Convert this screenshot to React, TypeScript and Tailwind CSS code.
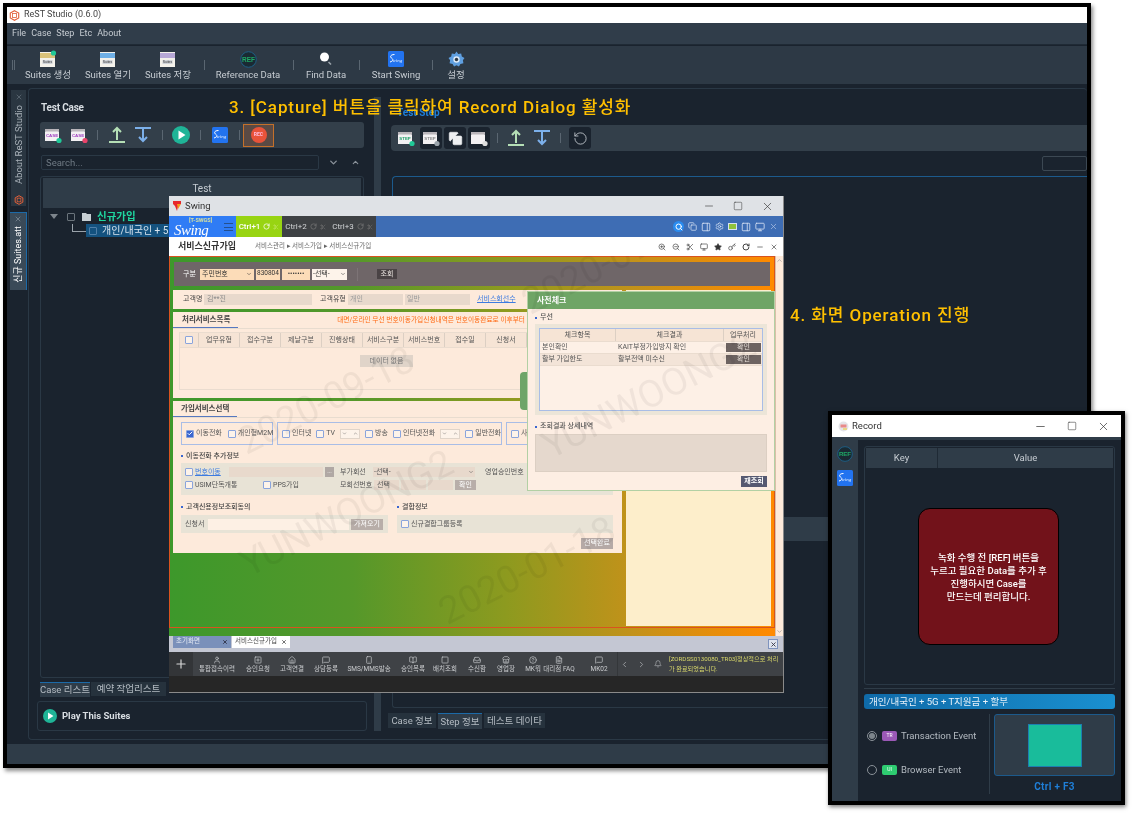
import { Check, ChevronLeft, ChevronRight, Bell, Copy, Key, Minus, Monitor, PanelRight, RotateCw, Scissors, Search, Settings, Square, Star, X, ZoomIn, ZoomOut, ChevronDown, ChevronUp, Plus, User, Home, MessageSquare, Smartphone, BookOpen, Inbox, Store, HelpCircle, FileText, PlusSquare } from "lucide-react";
import type { ReactNode } from "react";

function SwingBadge({ size = 16 }: { size?: number }) {
  return (
    <svg width={size} height={size} viewBox="0 0 16 16">
      <rect width="16" height="16" rx="1.5" fill="#2273f0" />
      <path d="M6.5 3.5C3 3.5 1.5 5.5 3.5 7S5.5 10 2 11" stroke="#fff" strokeWidth="1" fill="none" />
      <text x="4.5" y="11" fontSize="5" fontStyle="italic" fill="#e6f0ff" fontFamily="Liberation Serif">wing</text>
    </svg>
  );
}

function RefBadge({ size = 17 }: { size?: number }) {
  return (
    <svg width={size} height={size} viewBox="0 0 17 17">
      <circle cx="8.5" cy="8.5" r="7.8" fill="#1a2a33" stroke="#1d5f86" strokeWidth="1" />
      <text x="8.5" y="11" textAnchor="middle" fontSize="6.5" fontWeight="700" fill="#1fa866" fontFamily="Liberation Sans">REF</text>
    </svg>
  );
}

function SuiteIcon({ tone, dot }: { tone: string; dot?: boolean }) {
  return (
    <svg width="18" height="18" viewBox="0 0 18 18">
      <rect x="1" y="2" width="15" height="15" fill="#f3f1ea" />
      <rect x="1" y="3" width="15" height="5" fill={tone} />
      <rect x="3.5" y="10" width="10" height="4" fill="#cfd3d8" />
      <text x="8.5" y="13.4" textAnchor="middle" fontSize="3.4" fill="#333" fontFamily="Liberation Sans">Suites</text>
      {dot && <circle cx="14.5" cy="3" r="2.6" fill="#20c997" />}
    </svg>
  );
}

function BoxIcon({ label, color, dot }: { label: string; color: string; dot: string }) {
  return (
    <svg width="18" height="18" viewBox="0 0 18 18">
      <path d="M2 4h12l1 2v9H1V6z" fill="#f3f1f3" />
      <rect x="1" y="3" width="14" height="2.5" fill="#b9b5ba" />
      <text x="8" y="11" textAnchor="middle" fontSize="4.4" fontWeight="700" fill={color} fontFamily="Liberation Sans">{label}</text>
      <circle cx="15" cy="14.5" r="2.6" fill={dot} />
    </svg>
  );
}

function UpArrow() {
  return (
    <svg width="18" height="18" viewBox="0 0 18 18" fill="none">
      <path d="M9 2v12M5 6l4-4 4 4" stroke="#b5dfb6" strokeWidth="2" />
      <path d="M1 16h16" stroke="#b5dfb6" strokeWidth="2" />
    </svg>
  );
}

function DownArrow() {
  return (
    <svg width="18" height="18" viewBox="0 0 18 18" fill="none">
      <path d="M1 2h16" stroke="#7cb0ea" strokeWidth="2" />
      <path d="M9 3v12M5 11l4 4 4-4" stroke="#7cb0ea" strokeWidth="2" />
    </svg>
  );
}

function PlayDot({ size = 18 }: { size?: number }) {
  return (
    <svg width={size} height={size} viewBox="0 0 18 18">
      <circle cx="9" cy="9" r="9" fill="#1fb497" />
      <path d="M6.5 4.5l7 4.5-7 4.5z" fill="#fff" />
    </svg>
  );
}

function Hex({ size = 10 }: { size?: number }) {
  return (
    <svg width={size} height={size} viewBox="0 0 12 12" fill="none">
      <path d="M6 .8l4.6 2.6v5.2L6 11.2 1.4 8.6V3.4z" stroke="#e2603a" strokeWidth="1.2" />
      <rect x="3.8" y="3.8" width="4.4" height="4.4" stroke="#e2603a" strokeWidth=".9" />
    </svg>
  );
}

function Vsep({ cls = "" }: { cls?: string }) {
  return <span className={`block w-px h-[10px] bg-[#5a6671] ${cls}`} />;
}

function ToolItem({ width, label, children }: { width: string; label: string; children: ReactNode }) {
  return (
    <div className={`${width} flex flex-col items-center`}>
      <div className="h-[19px] flex items-center justify-center">{children}</div>
      <span className="-mt-[1px] text-[9.5px] leading-[13px] text-[#c6ccd2] whitespace-nowrap">{label}</span>
    </div>
  );
}

function DarkBtn({ children }: { children: ReactNode }) {
  return <div className="w-[22px] h-[22px] rounded-[3px] bg-[#1a232e] flex items-center justify-center">{children}</div>;
}

function SwingItem({ w, label, children }: { w: string; label: string; children: ReactNode }) {
  return (
    <div className={`${w} shrink-0 flex flex-col items-center text-[#c9cbce]`}>
      {children}
      <span className="mt-[1px] text-[6.5px] leading-[8px] whitespace-nowrap">{label}</span>
    </div>
  );
}

function Cb({ on, cls = "" }: { on?: boolean; cls?: string }) {
  return (
    <span className={`shrink-0 w-[8px] h-[8px] rounded-[1px] border border-[#8aa4dc] flex items-center justify-center ${on ? "bg-[#3a66d0]" : "bg-[#fdf3ea]"} ${cls}`}>
      {on && <Check size={7} color="#fff" strokeWidth={4} />}
    </span>
  );
}

function Head({ children, w }: { children: ReactNode; w: string }) {
  return <div className={`${w} h-full border-r border-[#dccfc3] flex items-center justify-center`}>{children}</div>;
}

function Mark({ cls, children }: { cls: string; children: string }) {
  return <span className={`absolute pointer-events-none whitespace-nowrap text-[38px] leading-none text-black/[0.05] -rotate-[27deg] ${cls}`}>{children}</span>;
}

function SwingWindow() {
  return (
    <div className="absolute left-[169px] top-[196px] w-[615px] h-[497px] flex flex-col bg-[#262626] border-r border-b border-[#8a8a8a]">
      <div className="h-[20px] shrink-0 bg-[#dfe2e6] flex items-center pl-[3px] text-[#333]">
        <svg width="10" height="12" viewBox="0 0 10 12">
          <path d="M1 1h8v3H6.5L5 11 3 6 1 4z" fill="#e8272c" />
          <path d="M5 4h4L6 9z" fill="#f59a1c" />
        </svg>
        <span className="ml-[3px] text-[9.5px]">Swing</span>
        <div className="ml-auto flex items-center gap-[18px] pr-[9px]">
          <Minus size={12} strokeWidth={1.2} />
          <Square size={10} strokeWidth={1.2} />
          <X size={13} strokeWidth={1.2} />
        </div>
      </div>

      <div className="h-[21px] shrink-0 bg-[#3e6db4] flex items-stretch">
        <div className="w-[67px] bg-[#2f7cf5] flex items-center relative pl-[5px]">
          <span className="absolute left-[20px] top-[1px] text-[5.5px] leading-[7px] text-[#d6e0a0] font-bold whitespace-nowrap">[T-SWGS]</span>
          <span className="mt-[6px] text-[15px] leading-[14px] text-white italic font-['Liberation_Serif',serif] tracking-[-0.5px]">Swing</span>
          <div className="absolute right-[3px] top-[7px] w-[9px] h-[8px] border-y border-[#24508f] flex items-center">
            <span className="block w-full h-px bg-[#24508f]" />
          </div>
        </div>
        <div className="w-[46px] bg-[#98d412] flex items-center justify-center gap-[3px] text-white text-[8px] font-medium whitespace-nowrap">
          Ctrl+1 <RotateCw size={7} strokeWidth={2.5} /> <Scissors size={6} className="text-[#c6e76a]" />
        </div>
        {["Ctrl+2", "Ctrl+3"].map((t) => (
          <div key={t} className="w-[47px] bg-[#3e4144] flex items-center justify-center gap-[3px] text-[#d2d4d6] text-[8px] whitespace-nowrap">
            {t} <RotateCw size={7} className="text-[#777]" strokeWidth={2.5} /> <Scissors size={6} className="text-[#777]" />
          </div>
        ))}
        <div className="ml-auto flex items-center gap-[4px] pr-[5px] text-[#d6e1f3]">
          <span className="w-[11px] h-[11px] rounded-full bg-[#2a8cf0] flex items-center justify-center"><Search size={8} color="#fff" strokeWidth={3} /></span>
          <Copy size={9} />
          <PanelRight size={10} />
          <Settings size={9} />
          <span className="w-[9px] h-[7px] bg-[#8fc23c] border border-[#d6e1f3]" />
          <PanelRight size={10} />
          <Monitor size={10} />
          <X size={9} className="text-[#a9bde0]" />
        </div>
      </div>

      <div className="h-[19px] shrink-0 bg-white flex items-center pl-[9px] text-[#444]">
        <span className="w-[77px] text-[9px] font-bold text-[#333] whitespace-nowrap">서비스신규가입</span>
        <span className="text-[6.5px] text-[#666] whitespace-nowrap">서비스관리 ▸ 서비스가입 ▸ 서비스신규가입</span>
        <div className="ml-auto flex items-center gap-[6px] pr-[5px] text-[#444]">
          <ZoomIn size={8} />
          <ZoomOut size={8} />
          <Scissors size={8} />
          <Monitor size={8} />
          <Star size={8} fill="#333" />
          <Key size={8} />
          <RotateCw size={8} strokeWidth={3} />
          <Minus size={8} />
          <X size={8} />
        </div>
      </div>

      <div className="h-[380px] shrink-0 flex bg-[linear-gradient(90deg,#3d982b_0%,#55982a_30%,#8d9a1f_55%,#c1921a_75%,#ff8a00_98%)] relative overflow-hidden whitespace-nowrap">
        <div className="w-[606px] h-[372px] border border-[#d9531e] p-[3px] flex flex-col gap-[4px] text-[#555] text-[7px]">
          <div className="h-[24px] mt-[2px] mx-[1px] bg-[#6f6668] flex items-center pl-[9px] gap-[2px] text-[#333] shrink-0">
            <span className="text-white w-[15px]">구분</span>
            <div className="w-[54px] h-[11px] bg-[#fcdcb8] flex items-center justify-between px-[2px]">주민번호<ChevronDown size={6} /></div>
            <div className="w-[24px] h-[11px] bg-[#fcdcb8] flex items-center px-[1px] text-[6.5px]">830804</div>
            <div className="w-[28px] h-[11px] bg-[#fcdcb8] flex items-center justify-center leading-none">•••••••</div>
            <div className="w-[35px] h-[11px] bg-[#fdf3ea] flex items-center justify-between px-[1px]">-선택-<ChevronDown size={6} /></div>
            <span className="ml-[8px] block w-px h-[13px] bg-[#7d7476]" />
            <span className="ml-[17px] w-[20px] h-[10px] bg-[#4a4345] text-[#e8e2de] flex items-center justify-center">조회</span>
          </div>

          <div className="flex gap-[4px] flex-1 min-h-0">
            <div className="w-[449px] flex flex-col gap-[3px]">
              <div className="h-[19px] bg-[#fdeadb] flex items-center pl-[10px] text-[#444] shrink-0">
                <span className="w-[21px]">고객명</span>
                <span className="w-[108px] h-[11px] bg-[#e8d9cc] pl-[3px] text-[#888] leading-[11px]">김**진</span>
                <span className="ml-[8px] w-[28px]">고객유형</span>
                <span className="w-[55px] h-[11px] bg-[#e8d9cc] pl-[2px] text-[#999] leading-[11px]">개인</span>
                <span className="ml-[2px] w-[65px] h-[11px] bg-[#e8d9cc] pl-[2px] text-[#999] leading-[11px]">일반</span>
                <span className="ml-[7px] text-[#3d7be0] underline">서비스회선수</span>
              </div>

              <div className="h-[86px] bg-[#fdeadb] px-[6px] shrink-0">
                <div className="h-[17px] -mx-[6px] flex items-center justify-between border-b border-[#e8dccf] relative pr-[97px]">
                  <span className="w-[65px] h-full border-b-[1.5px] border-[#5678c0] text-[7.5px] font-bold text-[#444] pl-[9px] leading-[16px]">처리서비스목록</span>
                  <span className="text-[6.7px] text-[#ff6a13]">대면/온라인 무선 번호이동가입신청내역은 번호이동완료로 이후부터</span>
                </div>
                <div className="mt-[3px] h-[16px] flex items-stretch bg-[#f6e4d5] border border-[#eadccf] text-[#555]">
                  <div className="w-[19px] border-r border-[#dccfc3] flex items-center justify-center"><Cb /></div>
                  <Head w="w-[41px]">업무유형</Head>
                  <Head w="w-[41px]">접수구분</Head>
                  <Head w="w-[41px]">제날구분</Head>
                  <Head w="w-[41px]">진행상태</Head>
                  <Head w="w-[41px]">서비스구분</Head>
                  <Head w="w-[41px]">서비스번호</Head>
                  <Head w="w-[41px]">접수일</Head>
                  <Head w="w-[41px]">신청서</Head>
                </div>
                <div className="h-[42px] border border-t-0 border-[#eadccf] flex justify-center pt-[7px] pr-[22px]">
                  <span className="w-[53px] h-[12px] bg-[#e0d4c9] text-[#777] flex items-center justify-center">데이터 없음</span>
                </div>
              </div>

              <div className="h-[152px] bg-[#fdeadb] shrink-0 text-[#555] flex flex-col">
                <div className="h-[17px] border-b border-[#e8dccf] shrink-0">
                  <span className="block w-[64px] h-full border-b-[1.5px] border-[#5678c0] text-[7.5px] font-bold text-[#444] pl-[8px] leading-[16px]">가입서비스선택</span>
                </div>
                <div className="mt-[4px] pl-[8px] flex gap-[4px] shrink-0">
                  <div className="w-[92px] h-[23px] border border-[#a9bde6] flex items-center pl-[4px] gap-[2px]">
                    <Cb on /><span className="mr-[4px]">이동전화</span><Cb /><span>개인형M2M</span>
                  </div>
                  <div className="w-[225px] h-[23px] border border-[#a9bde6] flex items-center pl-[4px] gap-[2px]">
                    <Cb /><span className="mr-[3px]">인터넷</span><Cb /><span>TV</span>
                    <span className="mx-[3px] w-[26px] h-[10px] border border-[#e0d4c9] bg-[#fdf3ea] flex items-center justify-between px-[1px]"><ChevronDown size={5} /><ChevronUp size={5} /></span>
                    <Cb /><span className="mr-[3px]">방송</span><Cb /><span>인터넷전화</span>
                    <span className="mx-[3px] w-[26px] h-[10px] border border-[#e0d4c9] bg-[#fdf3ea] flex items-center justify-between px-[1px]"><ChevronDown size={5} /><ChevronUp size={5} /></span>
                    <Cb /><span>일반전화</span>
                  </div>
                  <div className="w-[90px] h-[23px] border border-[#a9bde6] flex items-center pl-[4px] gap-[2px]">
                    <Cb /><span>사</span>
                  </div>
                </div>
                <div className="mt-[5px] pl-[8px] h-[12px] flex items-center font-medium text-[#444] shrink-0">
                  <span className="w-[2px] h-[2px] bg-[#3a66d0] mr-[3px]" />이동전화 추가정보
                </div>
                <div className="mt-[1px] ml-[8px] mr-[9px] h-[32px] bg-[#e8e3d6] shrink-0 flex flex-col gap-[1px] pt-[3px] pl-[4px]">
                  <div className="flex items-center h-[12px] gap-[2px]">
                    <Cb /><span className="w-[32px] text-[#3d7be0] underline">번호이동</span>
                    <span className="w-[94px] h-[10px] bg-[#e8d9cc]" />
                    <span className="w-[9px] h-[10px] bg-[#b0a8a4] text-white text-[6px] leading-[8px] text-center">...</span>
                    <span className="ml-[4px] w-[28px]">부가회선</span>
                    <span className="ml-[3px] w-[102px] h-[10px] bg-[#e8d9cc] pl-[1px] flex justify-between items-center pr-[1px]">-선택-<ChevronDown size={6} /></span>
                    <span className="ml-[8px]">영업승인번호</span>
                  </div>
                  <div className="flex items-center h-[12px] gap-[2px]">
                    <Cb /><span className="w-[66px]">USIM단독개통</span><Cb /><span className="w-[65px]">PPS가입</span>
                    <span className="w-[30px]">모회선번호</span>
                    <span className="ml-[2px] w-[25px] h-[10px] bg-[#e8d9cc] leading-[10px] pl-[3px]">선택</span>
                    <span className="w-[25px] h-[10px] bg-[#e8d9cc]" />
                    <span className="w-[25px] h-[10px] bg-[#e8d9cc]" />
                    <span className="w-[21px] h-[10px] bg-[#b8aea9] text-white leading-[10px] text-center">확인</span>
                  </div>
                </div>
                <div className="mt-[6px] pl-[8px] h-[12px] flex items-center font-medium text-[#444] shrink-0">
                  <span className="w-[2px] h-[2px] bg-[#3a66d0] mr-[3px]" /><span className="w-[211px]">고객신용정보조회동의</span>
                  <span className="w-[2px] h-[2px] bg-[#3a66d0] mr-[3px]" />결합정보
                </div>
                <div className="mt-[2px] pl-[8px] pr-[9px] flex gap-[9px] shrink-0">
                  <div className="w-[207px] h-[18px] bg-[#e8e3d6] flex items-center pl-[4px] gap-[2px]">
                    <span className="w-[21px]">신청서</span>
                    <span className="w-[141px] h-[11px] bg-[#fdf0e4]" />
                    <span className="w-[32px] h-[11px] bg-[#b8aea9] text-white leading-[11px] text-center">가져오기</span>
                  </div>
                  <div className="flex-1 h-[18px] bg-[#e8e3d6] flex items-center pl-[4px] gap-[2px]">
                    <Cb /><span>신규결합그룹등록</span>
                  </div>
                </div>
                <div className="mt-[5px] mr-[9px] flex justify-end shrink-0">
                  <span className="w-[32px] h-[11px] bg-[#b5a9a6] text-white leading-[11px] text-center">선택완료</span>
                </div>
              </div>
            </div>
            <div className="w-[145px] h-[336px] bg-[#fdeecb]" />
          </div>
        </div>
        <div className="w-[9px] h-[380px] bg-[#fdeadb] border-l border-[#d9bfa8] flex flex-col justify-between items-center py-[1px] text-[#888]">
          <ChevronUp size={7} />
          <ChevronDown size={7} />
        </div>

        {/* 팝업 */}
        <div className="absolute left-[351px] top-[116px] h-[38px] w-[7px] bg-[#6ea568] rounded-l-[4px]" />
        <div className="absolute left-[358px] top-[35px] w-[248px] h-[200px] bg-[#fdeee3] border border-[#b2d0a4] text-[7px] text-[#555]">
          <div className="h-[17px] bg-[#6fa566] text-white text-[8px] font-bold leading-[17px] pl-[9px]">사전체크</div>
          <div className="mt-[2px] pl-[7px] h-[13px] flex items-center font-medium">
            <span className="w-[2px] h-[2px] bg-[#3a66d0] mr-[3px]" />무선
          </div>
          <div className="mx-[7px] h-[91px] bg-[#ece5d8] p-[4px]">
            <div className="h-full border border-[#a9bde6] bg-[#fdf0e6]">
              <div className="h-[13px] flex bg-[#f6e4d5] border-b border-[#eadccf]">
                <Head w="w-[76px]">체크항목</Head>
                <Head w="w-[108px]">체크결과</Head>
                <div className="flex-1 flex items-center justify-center">업무처리</div>
              </div>
              {[["본인확인", "KAIT부정가입방지 확인"], ["할부 가입한도", "할부전액 미수신"]].map(([a, b], i) => (
                <div key={a} className={`h-[12px] flex items-center border-b border-[#eadccf] ${i ? "bg-[#f3e4d8]" : ""}`}>
                  <span className="w-[76px] pl-[2px]">{a}</span>
                  <span className="w-[108px] pl-[2px]">{b}</span>
                  <span className="ml-[2px] w-[35px] h-[9px] bg-[#6d6361] text-[#e8e0da] leading-[9px] text-center">확인</span>
                </div>
              ))}
            </div>
          </div>
          <div className="mt-[5px] pl-[7px] h-[13px] flex items-center font-medium">
            <span className="w-[2px] h-[2px] bg-[#3a66d0] mr-[3px]" />조회결과 상세내역
          </div>
          <div className="mt-[1px] mx-[7px] h-[38px] bg-[#e5d8cd] border border-[#dccfc3]" />
          <div className="mt-[4px] mr-[7px] flex justify-end">
            <span className="w-[26px] h-[11px] bg-[#565971] text-white font-bold leading-[11px] text-center">재조회</span>
          </div>
        </div>

        <Mark cls="left-[61px] top-[125px]">2020-09-18</Mark>
        <Mark cls="left-[345px] top-[-15px]">2020-09-18</Mark>
        <Mark cls="left-[363px] top-[120px]">YUNWOONG2</Mark>
        <Mark cls="left-[61px] top-[238px]">YUNWOONG2</Mark>
        <Mark cls="left-[262px] top-[295px]">2020-01-18</Mark>
      </div>

      <div className="h-[16px] shrink-0 bg-[#c4c7d3] flex items-start pl-[4px] gap-[1px] text-[6.5px] relative whitespace-nowrap">
        <div className="w-[58px] h-[12px] bg-[#7a90ba] flex items-center justify-between px-[3px] text-[#e6ebf5]">초기화면<X size={6} className="text-[#223]" strokeWidth={3} /></div>
        <div className="w-[58px] h-[12px] bg-white flex items-center justify-between px-[3px] text-[#444]">서비스신규가입<X size={6} strokeWidth={3} /></div>
        <span className="absolute right-[5px] top-[3px] w-[10px] h-[10px] border border-[#7f93bd] bg-[#dfe3ee] flex items-center justify-center"><X size={7} color="#334" strokeWidth={3} /></span>
      </div>

      <div className="h-[24px] shrink-0 bg-[#3f4246] flex items-center">
        <div className="w-[24px] shrink-0 h-full bg-[#333538] flex items-center justify-center text-[#d8d8d8]"><Plus size={14} /></div>
        <SwingItem w="w-[48px]" label="통합접속이력"><User size={8} /></SwingItem>
        <SwingItem w="w-[34px]" label="승인요청"><PlusSquare size={8} /></SwingItem>
        <SwingItem w="w-[34px]" label="고객연결"><Home size={8} /></SwingItem>
        <SwingItem w="w-[34px]" label="상담등록"><MessageSquare size={8} /></SwingItem>
        <SwingItem w="w-[52px]" label="SMS/MMS발송"><Smartphone size={8} /></SwingItem>
        <SwingItem w="w-[36px]" label="승인목록"><BookOpen size={8} /></SwingItem>
        <SwingItem w="w-[28px]" label="배치조회"><Square size={8} /></SwingItem>
        <SwingItem w="w-[36px]" label="수신함"><Inbox size={8} /></SwingItem>
        <SwingItem w="w-[22px]" label="영업장"><Store size={8} /></SwingItem>
        <SwingItem w="w-[32px]" label="MK뭐"><HelpCircle size={8} /></SwingItem>
        <SwingItem w="w-[20px]" label="대리점 FAQ"><FileText size={8} /></SwingItem>
        <SwingItem w="w-[48px] pl-[12px]" label="MK02"><MessageSquare size={8} /></SwingItem>
        <div className="shrink-0 flex items-center gap-[8px] text-[#aeb0b3] pl-[2px] pr-[7px] h-full border-l border-[#34373a]">
          <ChevronLeft size={9} /><ChevronRight size={9} /><Bell size={8} />
        </div>
        <div className="flex-1 min-w-0 text-[6.2px] leading-[10px] text-[#d9d86a] whitespace-nowrap">[ZORDSS0130080_TR03]정상적으로 처리<br />가 완료되었습니다.</div>
      </div>
      <div className="flex-1 bg-[#262626]" />
    </div>
  );
}

function RecordWindow() {
  return (
    <div className="absolute left-[828px] top-[411px] w-[297px] h-[394px] border-[4px] border-black bg-[#1a232e] flex flex-col shadow-[1px_2px_4px_rgba(0,0,0,0.5)]">
      <div className="h-[22px] shrink-0 bg-white flex items-center pl-[6px] text-[#333]">
        <svg width="11" height="11" viewBox="0 0 11 11">
          <circle cx="5.5" cy="5.5" r="5" fill="#e4e4e8" />
          <rect x="2.5" y="3.5" width="6" height="3" fill="#e98a8a" />
          <rect x="5" y="7" width="4" height="2" fill="#e8d888" />
        </svg>
        <span className="ml-[3px] text-[9.5px]">Record</span>
        <div className="ml-auto flex items-center gap-[20px] pr-[11px]">
          <Minus size={13} strokeWidth={1.3} />
          <Square size={10} strokeWidth={1.3} />
          <X size={13} strokeWidth={1.3} />
        </div>
      </div>
      <div className="flex-1 flex min-h-0 border-t-[3px] border-[#2f3c48]">
        <div className="w-[26px] shrink-0 bg-[#2f3c48] flex flex-col items-center pt-[6px] gap-[8px]">
          <RefBadge size={16} />
          <SwingBadge size={16} />
        </div>
        <div className="flex-1 px-[6px] pt-[6px] flex flex-col">
          <div className="h-[239px] rounded-[3px] border border-[#2a3845] px-[1px] pt-[1px] relative">
            <div className="h-[20px] bg-[#2f3c48] flex items-center text-[9.5px] text-[#c6ccd2]">
              <span className="w-[72px] h-full border-r border-[#1f2a35] flex items-center justify-center">Key</span>
              <span className="flex-1 text-center">Value</span>
            </div>
            <div className="absolute left-[53px] top-[61px] w-[141px] h-[137px] rounded-[12px] bg-[#72121a] border border-black flex items-center justify-center text-center text-[9.5px] leading-[13px] font-medium text-white">
              <p>녹화 수행 전 [REF] 버튼을<br />누르고 필요한 Data를 추가 후<br />진행하시면 Case를<br />만드는데 편리합니다.</p>
            </div>
          </div>
          <div className="mt-[3px] h-px bg-[#2f3c48]" />
          <div className="mt-[5px] h-[15px] rounded-[3px] bg-[linear-gradient(90deg,#0f6aa8,#1a90d0)] text-[9.5px] leading-[15px] text-[#e8f2fa] pl-[5px] whitespace-nowrap">개인/내국인 + 5G + T지원금 + 할부</div>
          <div className="mt-[5px] flex">
            <div className="w-[125px] h-[78px] flex flex-col gap-[20px] pt-[15px] pl-[3px] text-[9.5px] text-[#b4bbc2]">
              <div className="flex items-center h-[14px]">
                <span className="w-[10px] h-[10px] rounded-full border border-[#8a9198] flex items-center justify-center"><span className="w-[6px] h-[6px] rounded-full bg-[#7d858c]" /></span>
                <span className="ml-[5px] w-[15px] h-[10px] rounded-[2px] bg-[#9b59b6] text-[5px] text-white flex items-center justify-center">TR</span>
                <span className="ml-[4px] whitespace-nowrap">Transaction Event</span>
              </div>
              <div className="flex items-center h-[14px]">
                <span className="w-[10px] h-[10px] rounded-full border border-[#8a9198]" />
                <span className="ml-[5px] w-[15px] h-[10px] rounded-[2px] bg-[#2ecc71] text-[5px] text-white flex items-center justify-center">UI</span>
                <span className="ml-[4px] whitespace-nowrap">Browser Event</span>
              </div>
            </div>
            <div className="w-px h-[80px] bg-[#2f3c48]" />
            <div className="ml-[4px] flex-1 flex flex-col items-center">
              <div className="w-full h-[62px] rounded-[3px] border border-[#1c5a8c] bg-[#2f3c48] flex items-center justify-center">
                <span className="w-[54px] h-[43px] bg-[#19bc9b] border border-[#1c7fb0]" />
              </div>
              <span className="mt-[3px] text-[10px] font-bold text-[#1f7fd8] tracking-[0.3px]">Ctrl + F3</span>
            </div>
          </div>
        </div>
      </div>
    </div>
  );
}

function MainWindow() {
  return (
    <div className="absolute left-[3px] top-[3px] w-[1088px] h-[765px] border-[4px] border-black bg-[#1a232e] flex flex-col shadow-[2px_3px_4px_rgba(0,0,0,0.45)]">
      <div className="h-[16px] shrink-0 bg-white flex items-center pl-[2px] text-[#444]">
        <Hex size={11} />
        <span className="ml-[4px] text-[9px]">ReST Studio (0.6.0)</span>
      </div>
      <div className="h-[22px] shrink-0 bg-[#303d4a] border-b border-[#1f2a35] flex items-center pl-[5px] gap-[5px] text-[9px] text-[#c6ccd2]">
        <span>File</span><span>Case</span><span>Step</span><span>Etc</span><span>About</span>
      </div>
      <div className="h-[38px] shrink-0 mt-px bg-[#2d3945] flex items-center text-[#c6ccd2]">
        <span className="ml-[5px] mr-[3px] w-[3px] h-[10px] border-x border-[#5a6671]" />
        <ToolItem width="w-[60px]" label="Suites 생성"><SuiteIcon tone="#d9c27a" dot /></ToolItem>
        <ToolItem width="w-[60px]" label="Suites 열기"><SuiteIcon tone="#6fb0e6" /></ToolItem>
        <ToolItem width="w-[60px]" label="Suites 저장"><SuiteIcon tone="#b7a8d6" /></ToolItem>
        <Vsep cls="ml-[6px] mr-[7px]" />
        <ToolItem width="w-[72px]" label="Reference Data"><RefBadge /></ToolItem>
        <Vsep cls="ml-[9px] mr-[6px]" />
        <ToolItem width="w-[52px]" label="Find Data">
          <svg width="16" height="16" viewBox="0 0 16 16"><circle cx="6.5" cy="6" r="4.5" fill="#fff" /><path d="M10.5 11l2.5 2.5" stroke="#9aa3ab" strokeWidth="1.6" /></svg>
        </ToolItem>
        <Vsep cls="ml-[7px] mr-[6px]" />
        <ToolItem width="w-[60px]" label="Start Swing"><SwingBadge /></ToolItem>
        <Vsep cls="ml-[6px] mr-[6px]" />
        <ToolItem width="w-[34px]" label="설정">
          <svg width="17" height="17" viewBox="0 0 16 16"><path d="M8 .5l1.6 2.3 2.8-.5.6 2.8 2.5 1.4L14 8.8l.5 2.8-2.8.6-1.4 2.5L8 13.5l-2.3 1.2-1.4-2.5-2.8-.6L2 8.8.5 6.5 3 5.1l.6-2.8 2.8.5z" fill="#5f9fe0" /><circle cx="8" cy="8" r="3" fill="#dce9f7" /><circle cx="8" cy="8" r="1.6" fill="#2d3945" /></svg>
        </ToolItem>
      </div>

      <div className="flex-1 min-h-0 flex">
        <div className="w-[21px] shrink-0 pt-[6px] pl-[4px] flex flex-col gap-[6px]">
          <div className="w-[15px] h-[116px] bg-[#2a3641] flex flex-col items-center pt-[3px] text-[#6a7580]">
            <X size={8} />
            <span className="mt-[4px] [writing-mode:vertical-rl] [text-orientation:sideways] rotate-180 text-[9.5px] leading-[13px] text-[#aab2ba] whitespace-nowrap">About ReST Studio</span>
            <div className="mt-auto mb-[1px]"><Hex size={10} /></div>
          </div>
          <div className="-ml-px w-[17px] h-[78px] bg-[#3a4a58] border-t border-[#1c6aa8] border-r-[1.5px] border-r-[#1c6aa8] flex flex-col items-center pt-[2px] text-[#8a95a0]">
            <X size={8} />
            <span className="mt-[3px] [writing-mode:vertical-rl] [text-orientation:sideways] rotate-180 text-[9px] leading-[13px] text-white whitespace-nowrap">신규 Suites.att</span>
          </div>
        </div>

        <div className="flex-1 min-w-0 flex flex-col">
          <div className="mt-[4px] h-[652px] rounded-[4px] border border-[#2a3845] border-r-0 flex pl-[8px]">
            <div className="w-[330px] shrink-0 flex flex-col">
              <div className="h-[33px] shrink-0 flex items-center pl-[4px] pt-[3px] text-[10px] font-bold text-[#d8dde2] tracking-[-0.2px]">Test Case</div>
              <div className="ml-[3px] mr-[3px] h-[26px] shrink-0 rounded-[3px] bg-[#333f4a] flex items-center pl-[4px]">
                <BoxIcon label="CASE" color="#a040c0" dot="#20c997" />
                <span className="ml-[8px]"><BoxIcon label="CASE" color="#a040c0" dot="#e8436a" /></span>
                <Vsep cls="ml-[9px] mr-[10px]" />
                <UpArrow />
                <span className="ml-[8px]"><DownArrow /></span>
                <Vsep cls="ml-[10px] mr-[9px]" />
                <PlayDot />
                <Vsep cls="ml-[10px] mr-[11px]" />
                <SwingBadge />
                <Vsep cls="ml-[11px] mr-[3px]" />
                <div className="w-[31px] h-[23px] bg-[#5a4a44] border border-[#c4702a] flex items-center justify-center">
                  <span className="w-[16px] h-[16px] rounded-full bg-[#e8533a] text-[5px] font-bold text-[#fbd] flex items-center justify-center">REC</span>
                </div>
              </div>
              <div className="mt-[7px] ml-[4px] shrink-0 flex items-center">
                <div className="w-[278px] h-[15px] rounded-[2px] border border-[#2a3845] bg-[#1a232e] pl-[4px] text-[9.5px] leading-[13px] text-[#6f7a84]">Search...</div>
                <ChevronDown size={11} className="ml-[9px] text-[#8a929a]" strokeWidth={3} />
                <ChevronUp size={9} className="ml-[12px] text-[#8a929a]" strokeWidth={3} />
              </div>
              <div className="mt-[6px] ml-[3px] mr-[3px] h-[502px] shrink-0 rounded-[3px] border border-[#2a3845] px-[2px] pt-[1px]">
                <div className="h-[30px] bg-[#2f3c48] flex justify-center pt-[5px] text-[10px] leading-[12px] text-[#c6ccd2]">Test</div>
                <div className="mt-[2px] pl-[7px] flex items-center h-[13px]">
                  <span className="w-0 h-0 border-x-[4px] border-x-transparent border-t-[5px] border-t-[#7d858c]" />
                  <span className="ml-[9px] w-[8px] h-[8px] border border-[#6a737b] rounded-[1px]" />
                  <svg className="ml-[7px]" width="9" height="8" viewBox="0 0 9 8"><path d="M0 0h4l1 1h4v7H0z" fill="#c8cfd4" /></svg>
                  <span className="ml-[6px] text-[10.5px] leading-[13px] font-bold text-[#1fd6a0]">신규가입</span>
                </div>
                <div className="pl-[29px] flex items-end h-[14px]">
                  <span className="w-[14px] h-[8px] mb-[5px] border-l border-b border-[#9aa3ab]" />
                  <div className="w-[200px] h-[13px] bg-[#14527f] flex items-center pl-[3px]">
                    <span className="w-[8px] h-[8px] border border-[#4f7fa8] rounded-[1px]" />
                    <span className="ml-[5px] text-[10px] text-[#d8e4ee] whitespace-nowrap">개인/내국인 + 5G + T지원금</span>
                  </div>
                </div>
              </div>
              <div className="mt-[4px] ml-[3px] h-[16px] shrink-0 flex text-[9.5px] text-[#b4bbc2] gap-px whitespace-nowrap">
                <span className="w-[50px] h-[15px] bg-[#2f3c48] border-t border-[#1c6aa8] text-center leading-[14px]">Case 리스트</span>
                <span className="w-[75px] h-[14px] bg-[#26323d] text-center leading-[14px]">예약 작업리스트</span>
              </div>
              <div className="mt-[3px] h-[30px] shrink-0 rounded-[3px] border border-[#2a3845] flex items-center pl-[5px] gap-[5px] text-[9.5px] font-bold text-[#d8dde2]">
                <PlayDot size={14} /> Play This Suites
              </div>
            </div>

            <div className="ml-[7px] mt-[8px] mb-[8px] w-[7px] shrink-0 bg-[#2f3c48]" />

            <div className="ml-[10px] flex-1 min-w-0 flex flex-col pb-[11px]">
              <div className="h-[36px] shrink-0 flex items-center pl-[6px] pt-[10px] text-[10px] font-bold text-[#1f7fd8]">Test Step</div>
              <div className="h-[26px] shrink-0 rounded-l-[4px] bg-[#333f4a] flex items-center pl-[6px]">
                <BoxIcon label="STEP" color="#22a06b" dot="#20c997" />
                <span className="ml-[5px]"><DarkBtn><BoxIcon label="STEP" color="#8a8a8a" dot="#9aa3ab" /></DarkBtn></span>
                <span className="ml-[2px]"><DarkBtn><Copy size={15} color="#eef0f2" fill="#eef0f2" strokeWidth={1} /></DarkBtn></span>
                <span className="ml-[2px]"><DarkBtn><BoxIcon label="" color="#888" dot="#ddd" /></DarkBtn></span>
                <Vsep cls="ml-[7px] mr-[9px]" />
                <UpArrow />
                <span className="ml-[8px]"><DownArrow /></span>
                <Vsep cls="ml-[9px] mr-[8px]" />
                <DarkBtn><RotateCw size={15} color="#b8bec4" className="-scale-x-100" strokeWidth={1.5} /></DarkBtn>
              </div>
              <div className="h-[25px] shrink-0 flex items-center justify-end">
                <span className="w-[45px] h-[15px] border border-[#3c4853] rounded-[2px]" />
              </div>
              <div className="h-[341px] shrink-0 rounded-tl-[4px] border-l-[1.5px] border-t-[1.5px] border-[#1c5a8c] ml-px" />
              <div className="h-[24px] shrink-0 ml-px bg-[#2f3c48]" />
              <div className="flex-1 ml-px rounded-bl-[3px] border-l border-b border-[#2a3845]" />
              <div className="shrink-0 flex text-[9.5px] text-[#b4bbc2] gap-[2px] -ml-[3px] h-[20px] whitespace-nowrap">
                <span className="w-[48px] h-[15px] mt-[5px] bg-[#26323d] text-center leading-[15px]">Case 정보</span>
                <span className="w-[44px] h-[16px] mt-[5px] bg-[#2f3c48] border-t border-[#1c6aa8] text-center leading-[15px]">Step 정보</span>
                <span className="w-[61px] h-[15px] mt-[5px] bg-[#26323d] text-center leading-[15px]">테스트 데이타</span>
              </div>
            </div>
          </div>
        </div>
      </div>
      <div className="h-[20px] shrink-0 bg-[#2f3c48]" />
    </div>
  );
}

export default function App() {
  return (
    <div className="relative w-[1133px] h-[814px] overflow-hidden bg-white blur-[0.3px] font-['Roboto','Noto_Sans_CJK_KR',sans-serif]">
      <MainWindow />
      <p className="absolute left-[229px] top-[95px] text-[17px] leading-[24px] font-medium text-[#ffc000] whitespace-nowrap tracking-[0.9px]">3. [Capture] 버튼을 클릭하여 Record Dialog 활성화</p>
      <SwingWindow />
      <p className="absolute left-[790px] top-[303px] text-[17px] leading-[24px] font-medium text-[#ffc000] whitespace-nowrap tracking-[0.9px]">4. 화면 Operation 진행</p>
      <RecordWindow />
    </div>
  );
}
